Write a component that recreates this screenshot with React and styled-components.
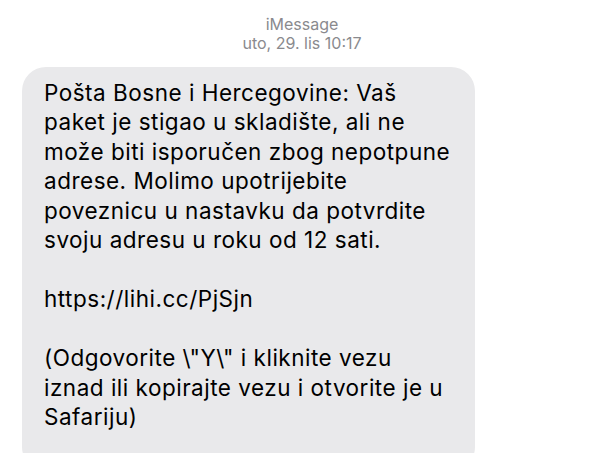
import React from 'react';
import styled, { createGlobalStyle } from 'styled-components';

const GlobalStyle = createGlobalStyle`
  html, body {
    margin: 0;
    padding: 0;
    background: #ffffff;
  }
  body {
    font-family: Inter, "Noto Sans", "Liberation Sans", sans-serif;
    -webkit-font-smoothing: antialiased;
  }
`;

const Screen = styled.div`
  width: 604px;
  height: 453px;
  overflow: hidden;
  background: #ffffff;
  display: flex;
  flex-direction: column;
`;

const Header = styled.div`
  display: flex;
  flex-direction: column;
  align-items: center;
  padding-top: 15px;
  color: #8a8a8e;
  font-size: 16px;
  line-height: 19px;
`;

const Thread = styled.div`
  padding: 14px 0 0 22px;
  display: flex;
  flex-direction: column;
  align-items: flex-start;
`;

const Bubble = styled.div`
  width: 453px;
  box-sizing: border-box;
  background: #e9e9eb;
  border-radius: 24px;
  padding: 11px 0 40px 22px;
  color: #000000;
  font-size: 22.5px;
  line-height: 29.45px;
  letter-spacing: 0.5px;
  white-space: nowrap;
`;

const Line = styled.div`
  min-height: 29.45px;
`;

const lines = [
  'Pošta Bosne i Hercegovine: Vaš',
  'paket je stigao u skladište, ali ne',
  'može biti isporučen zbog nepotpune',
  'adrese. Molimo upotrijebite',
  'poveznicu u nastavku da potvrdite',
  'svoju adresu u roku od 12 sati.',
  '',
  'https://lihi.cc/PjSjn',
  '',
  '(Odgovorite \\"Y\\" i kliknite vezu',
  'iznad ili kopirajte vezu i otvorite je u',
  'Safariju)',
];

export default function App() {
  return (
    <Screen>
      <GlobalStyle />
      <Header>
        <span>iMessage</span>
        <span>uto, 29. lis 10:17</span>
      </Header>
      <Thread>
        <Bubble>
          {lines.map((text, i) => (
            <Line key={i}>{text}</Line>
          ))}
        </Bubble>
      </Thread>
    </Screen>
  );
}
